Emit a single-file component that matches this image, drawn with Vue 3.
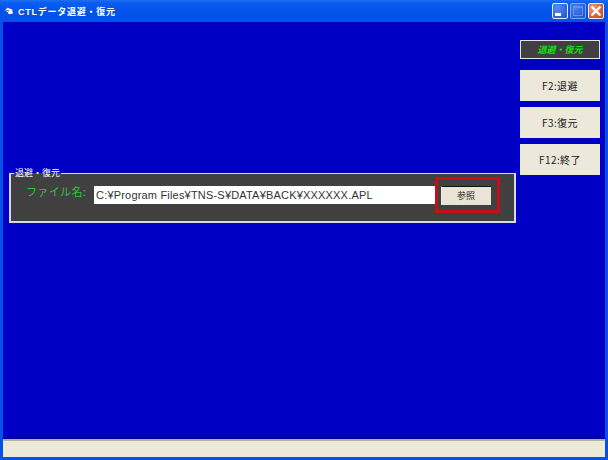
<script setup>
const buttons = ['F2:退避', 'F3:復元', 'F12:終了']
</script>

<template>
  <div class="window">
    <header class="titlebar">
      <svg class="appicon" width="8" height="8" viewBox="0 0 10 10">
        <path d="M0 4 L3 1 L9 3 L10 8 L5 9 L3 6 Z" fill="#fff" />
        <path d="M1 4 L4 4 L5 6" stroke="#445" stroke-width="1" fill="none" />
      </svg>
      <span class="title">CTLデータ退避・復元</span>
      <div class="controls">
        <span class="ctl blue">
          <svg width="20" height="20" viewBox="0 0 20 20"><rect x="5" y="12" width="6" height="3" fill="#fff" /></svg>
        </span>
        <span class="ctl blue dim">
          <svg width="20" height="20" viewBox="0 0 20 20"><rect x="5.5" y="5.5" width="9" height="9" fill="none" stroke="#7f9ee8" /><rect x="5" y="5" width="10" height="2" fill="#7f9ee8" /></svg>
        </span>
        <span class="ctl red">
          <svg width="20" height="20" viewBox="0 0 20 20"><path d="M5.5 5.5 L14.5 14.5 M14.5 5.5 L5.5 14.5" stroke="#fff" stroke-width="2.4" /></svg>
        </span>
      </div>
    </header>

    <div class="client">
      <main class="content">
        <div class="left">
          <fieldset class="panel">
            <legend>退避・復元</legend>
            <div class="row">
              <label class="filelabel">ファイル名:</label>
              <div class="path">C:¥Program Files¥TNS-S¥DATA¥BACK¥XXXXXX.APL</div>
              <div class="highlight">
                <button class="browse">参照</button>
              </div>
            </div>
          </fieldset>
        </div>
        <aside class="side">
          <div class="mode">退避・復元</div>
          <button v-for="b in buttons" :key="b" class="fkey">{{ b }}</button>
        </aside>
      </main>
      <footer class="status"></footer>
    </div>
  </div>
</template>

<style>
html, body { margin: 0; padding: 0; background: #0a3fd0; overflow: hidden; }
</style>

<style scoped>
.window {
  width: 608px;
  height: 460px;
  box-sizing: border-box;
  display: flex;
  flex-direction: column;
  background: #0553e6;
  padding: 0 3px 3px;
  font-family: "Noto Sans CJK JP", "Liberation Sans", sans-serif;
}
.titlebar {
  height: 22px;
  flex: none;
  margin: 0 -3px;
  padding: 0 5px;
  display: flex;
  align-items: center;
  gap: 5px;
  background: linear-gradient(#1c6ff0 0, #0a5cf0 3px, #0453e8 12px, #0550ea 100%);
}
.appicon { flex: none; }
.title {
  color: #fff;
  font-size: 9px;
  font-weight: 700;
  letter-spacing: 0.75px;
  white-space: nowrap;
  font-family: "Liberation Sans", "Noto Sans CJK JP", sans-serif;
}
.controls { margin-left: auto; display: flex; gap: 2px; margin-right: -1px; }
.ctl {
  width: 14px;
  height: 14px;
  box-sizing: content-box;
  border: 1px solid #e8eefc;
  border-radius: 2px;
  display: block;
  overflow: hidden;
}
.ctl svg { display: block; margin: -3px; }
.blue { background: radial-gradient(circle at 30% 30%, #5d8cee, #2a5bd8 80%); }
.dim { opacity: .8; border-color: #9db8ee; }
.red { background: radial-gradient(circle at 30% 30%, #f09a7c, #d24b24 80%); }

.client {
  flex: 1;
  min-height: 0;
  display: flex;
  flex-direction: column;
  background: #0000c4;
}
.content { flex: 1; display: flex; min-height: 0; }
.left { flex: 1; padding: 147px 0 0 6px; }
.panel {
  width: 507px;
  height: 54px;
  box-sizing: border-box;
  margin: 0;
  padding: 0;
  min-width: 0;
  background: #404040;
  border: 2px solid #d8d8e8;
  border-top-width: 1px;
  border-radius: 0;
}
.panel legend {
  margin-left: 3px;
  padding: 0 1px;
  color: #fff;
  font-size: 9px;
  line-height: 8px;
  height: 8px;
  background: linear-gradient(#0000c4 4px, #404040 4px);
}
.row { display: flex; align-items: center; padding: 0 0 0 15px; }
.filelabel {
  width: 68px;
  flex: none;
  color: #35c435;
  font-size: 11px;
  line-height: 14px;
  letter-spacing: .35px;
  margin-top: -8px;
  white-space: nowrap;
}
.path {
  width: 341px;
  height: 18px;
  flex: none;
  background: #fff;
  color: #333;
  font-size: 11px;
  line-height: 18px;
  padding-left: 2px;
  box-sizing: border-box;
  font-family: "Liberation Sans", sans-serif;
  letter-spacing: .19px;
}
.highlight {
  border: 3px solid #c01018;
  width: 65px;
  height: 36px;
  flex: none;
  box-sizing: border-box;
  display: flex;
  align-items: center;
  justify-content: center;
}
.browse {
  width: 50px;
  height: 19px;
  margin-right: 4px;
  background: #e9e4d6;
  border: 0;
  border-top: 1px solid #111;
  border-left: 1px solid #eee;
  padding: 0;
  font: 9px "Noto Sans CJK JP", sans-serif;
  color: #222;
}
.side {
  width: 84px;
  flex: none;
  padding-top: 18px;
  margin-right: 1px;
  display: flex;
  flex-direction: column;
  align-items: flex-start;
}
.mode {
  width: 80px;
  height: 19px;
  box-sizing: border-box;
  border: 1px solid #e4e4f0;
  background: #404040;
  color: #10e010;
  font-size: 9px;
  line-height: 17px;
  font-weight: 700;
  font-style: italic;
  text-align: center;
  margin-bottom: 11px;
}
.fkey {
  width: 80px;
  height: 31px;
  box-sizing: border-box;
  background: #ece8da;
  border: 0;
  margin-bottom: 6px;
  padding: 0;
  color: #222;
  font: 10px "Noto Sans CJK JP", sans-serif;
  letter-spacing: .4px;
}
.status {
  height: 18px;
  box-sizing: border-box;
  flex: none;
  background: #ece9d8;
  border-top: 2px solid #b4b0a2;
  box-shadow: 0 -1px 0 #00008a;
}
</style>
